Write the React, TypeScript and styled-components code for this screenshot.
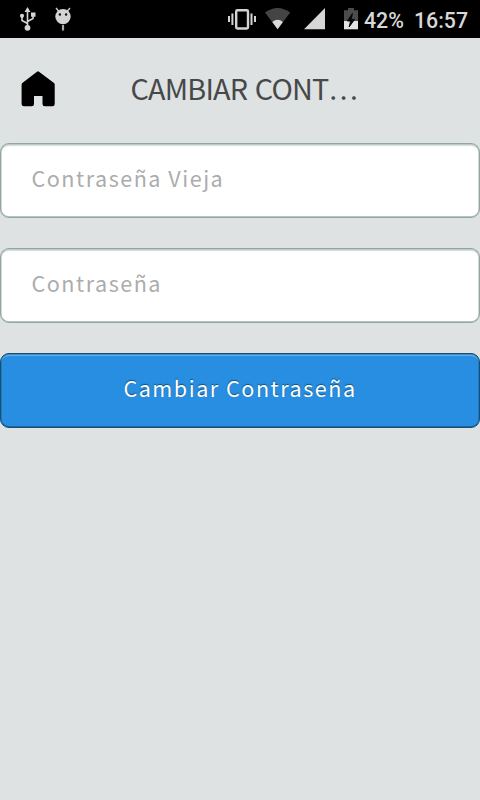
import React from "react";
import styled, { createGlobalStyle } from "styled-components";

const GlobalStyle = createGlobalStyle`
  * { box-sizing: border-box; }
  html, body { margin: 0; background: #dee2e3; }
  body { font-family: "Noto Sans CJK SC", "Noto Sans", sans-serif; }
`;

const Screen = styled.main`
  width: 480px;
  height: 800px;
  overflow: hidden;
  background: #dee2e3;
`;

const StatusBar = styled.div`
  display: flex;
  align-items: center;
  height: 38px;
  padding: 0 12px 0 19px;
  background: #000;
  color: #d8d8d8;
  font: 500 21.3px/38px Roboto, sans-serif;
`;

const StatusIcon = styled.svg<{ $gap?: number }>`
  display: block;
  flex: none;
  margin-right: ${(p) => p.$gap ?? 0}px;
`;

const Spacer = styled.div`
  flex: 1;
`;

const Battery = styled.span`
  width: 50px;
  padding-top: 3px;
  white-space: nowrap;
`;

const Clock = styled.span`
  padding-top: 3px;
`;

const Header = styled.header`
  display: flex;
  align-items: center;
  height: 105px;
  padding: 0 122px 0 20px;
`;

const HomeButton = styled.button`
  display: flex;
  width: 36px;
  height: 38px;
  margin: 0 74.5px 3px 0;
  padding: 0;
  border: 0;
  background: none;
`;

const Title = styled.h1`
  margin: 0 0 6px;
  color: #484848;
  font-size: 28.8px;
  font-weight: 400;
  line-height: 40px;
  letter-spacing: -0.8px;
  word-spacing: 1.9px;
  white-space: nowrap;
`;

const Ellipsis = styled.span`
  font-size: 27.6px;
  letter-spacing: 0;
`;

const Form = styled.form`
  display: flex;
  flex-direction: column;
  gap: 30px;
`;

const Field = styled.input`
  display: block;
  width: 480px;
  height: 75px;
  padding: 0 30.5px 7px;
  border: 1px solid #93a5a2;
  border-radius: 9px;
  outline: 0;
  background: #fff;
  box-shadow: inset 0 0 0 0.5px #a9b8b5, inset 0 2px 1px #d5dbdb, inset 0 -1px 0 #c6d0ce;
  font: 400 21.6px/32px "Noto Sans CJK SC", sans-serif;
  letter-spacing: 1.5px;
  &::placeholder {
    color: #acacac;
    opacity: 1;
  }
`;

const Submit = styled.button`
  width: 480px;
  height: 75px;
  padding: 0 0 6px;
  border: 1px solid #145072;
  border-radius: 9px;
  background: #288ee1;
  box-shadow: inset 0 0 0 0.5px #1b679f, inset 0 2px 0 #65aee9, inset 0 -1px 0 #1c6ba8;
  color: #fff;
  font: 400 21.6px/32px "Noto Sans CJK SC", sans-serif;
  letter-spacing: 1.5px;
  text-shadow: 0 -1.5px 1px #145072;
`;

const UsbIcon = () => (
  <StatusIcon $gap={17} width="18" height="26" viewBox="0 0 18 26" fill="none" stroke="#d4d4d4" strokeWidth="1.6">
    <path d="M8.5 4v18M8.5 17.5 3 14.5V10M8.5 15.5l5.5-3V9" />
    <path d="M8.5 1 11.5 6h-6zM12 6.5h4.5v4.2H12z" fill="#d4d4d4" stroke="none" />
    <circle cx="3" cy="9.8" r="2.1" fill="#d4d4d4" stroke="none" />
    <circle cx="8.5" cy="21.8" r="2.9" fill="#d4d4d4" stroke="none" />
  </StatusIcon>
);

const DroidIcon = () => (
  <StatusIcon width="18" height="26" viewBox="0 0 18 26">
    <path d="m2 2 3 3.5M16 2l-3 3.5" stroke="#d4d4d4" strokeWidth="1.3" />
    <circle cx="9" cy="10.6" r="7.7" fill="#d4d4d4" />
    <circle cx="5.9" cy="8.5" r="1.2" fill="#111" />
    <circle cx="12.1" cy="8.5" r="1.2" fill="#111" />
    <path d="M9 19v5.5" stroke="#aaa" strokeWidth="2.2" />
  </StatusIcon>
);

const VibrateIcon = () => (
  <StatusIcon $gap={8} width="29" height="22" viewBox="0 0 29 22" fill="none" stroke="#d4d4d4">
    <rect x="8.2" y="2.2" width="11.8" height="18.3" rx="1.2" strokeWidth="2.4" />
    <path d="M1 8v6M27 8v6" strokeWidth="2" />
    <path d="M4.4 5.5v11.5M23.5 5.5v11.5" strokeWidth="2" />
  </StatusIcon>
);

const WifiIcon = () => (
  <StatusIcon $gap={12} width="27" height="22" viewBox="0 0 27 22">
    <path d="M0 4.5Q12.6-4.5 25.2 4.5L12.6 21.2z" fill="#444" />
    <path d="M7.3 14q5.3-4.6 10.600 0L12.600 21.200z" fill="#dadada" />
  </StatusIcon>
);

const SignalIcon = () => (
  <StatusIcon $gap={19} width="21" height="22" viewBox="0 0 21 22">
    <path d="M21 0v21.2H0z" fill="#d6d6d6" />
  </StatusIcon>
);

const BatteryIcon = () => (
  <StatusIcon $gap={6} width="14" height="22" viewBox="0 0 14 22">
    <path d="M4 0h6v2.3h4V13H0V2.3h4z" fill="#4c4c4c" />
    <path d="M0 13h14v8.3H0z" fill="#e4e4e4" />
    <path d="m8.4 5.5-5 7.5h3.2l-1.5 6 5.5-7.6H7.2z" fill="#080808" stroke="#080808" />
  </StatusIcon>
);

export default function App() {
  return (
    <>
      <GlobalStyle />
      <Screen>
        <StatusBar>
          <UsbIcon />
          <DroidIcon />
          <Spacer />
          <VibrateIcon />
          <WifiIcon />
          <SignalIcon />
          <BatteryIcon />
          <Battery>42%</Battery>
          <Clock>16:57</Clock>
        </StatusBar>
        <Header>
          <HomeButton aria-label="Inicio">
            <svg width="36" height="38" viewBox="0 0 36 38">
              <path d="M17 1.7q1-.7 2 0L34 12.9q.7.6.7 1.6V34q0 2.3-2.3 2.3h-7.5q-2.4 0-2.4-2.3v-8H14v8q0 2.3-2.4 2.3H4Q1.6 36.3 1.6 34V14.7q0-1 .7-1.7z" />
            </svg>
          </HomeButton>
          <Title>
            CAMBIAR CONT<Ellipsis>…</Ellipsis>
          </Title>
        </Header>
        <Form onSubmit={(e) => e.preventDefault()}>
          <Field type="password" placeholder="Contraseña Vieja" />
          <Field type="password" placeholder="Contraseña" />
          <Submit>Cambiar Contraseña</Submit>
        </Form>
      </Screen>
    </>
  );
}
